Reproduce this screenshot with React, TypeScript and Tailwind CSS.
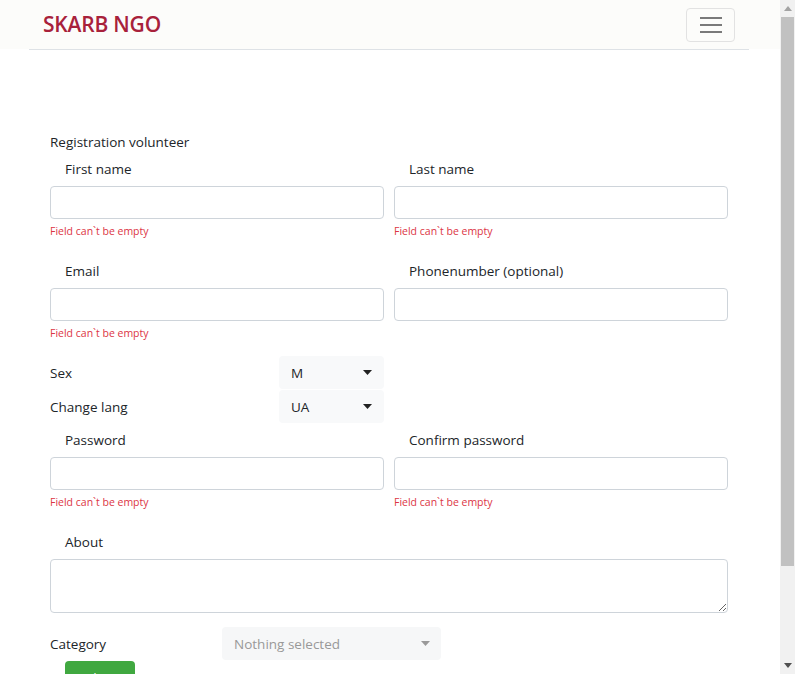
import React from "react";

const font = { fontFamily: '"Open Sans", "Noto Sans", Arial, sans-serif' };

function Caret({ gray }: { gray?: boolean }) {
  return (
    <svg width="9" height="5" viewBox="0 0 9 5" className="shrink-0">
      <path d="M0 0 L9 0 L4.5 5 Z" fill={gray ? "#9a9a9a" : "#222"} />
    </svg>
  );
}

function Field({ label, error }: { label: string; error?: boolean }) {
  return (
    <div className="flex flex-col w-[334px]">
      <div className="pl-[15px] h-[21px] leading-[23px] text-[13.5px] text-[#212529]">{label}</div>
      <div className="mt-[7px] h-[33px] rounded-[4px] border border-[#ced4da] bg-white" />
      {error ? (
        <div className="mt-[4px] h-[16px] leading-[16px] text-[10.5px] text-[#dc3545]">Field can`t be empty</div>
      ) : (
        <div className="mt-[4px] h-[16px]" />
      )}
    </div>
  );
}

function SelectRow({ label, value, top }: { label: string; value: string; top?: boolean }) {
  return (
    <div className={`flex items-center h-[33px] ${top ? "" : "mt-[1px]"}`}>
      <div className="w-[229px] pt-[2px] text-[13.5px] text-[#212529]">{label}</div>
      <div className="w-[105px] h-[33px] rounded-[4px] bg-[#f8f9fa] flex items-center justify-between pl-[12px] pr-[12px] text-[13.5px] text-[#212529]">
        <span className="pt-[2px]">{value}</span>
        <Caret />
      </div>
    </div>
  );
}

function Scrollbar() {
  return (
    <div className="w-[15px] h-[674px] bg-[#f1f1f1] flex flex-col items-center shrink-0">
      <div className="h-[17px] w-full flex items-center justify-center">
        <svg width="8" height="5" viewBox="0 0 8 5"><path d="M0 5 L8 5 L4 0 Z" fill="#a3a3a3" /></svg>
      </div>
      <div className="w-[13px] h-[549px] bg-[#c1c1c1]" />
      <div className="flex-1" />
      <div className="h-[17px] w-full flex items-center justify-center">
        <svg width="8" height="5" viewBox="0 0 8 5"><path d="M0 0 L8 0 L4 5 Z" fill="#505050" /></svg>
      </div>
    </div>
  );
}

export default function App() {
  return (
    <div className="flex h-[674px] overflow-hidden bg-white" style={font}>
      <div className="w-[780px] shrink-0 h-[674px] overflow-hidden">
        <div className="bg-[#fcfcfa] h-[49px]">
          <div className="ml-[29px] w-[720px] h-[49px] flex items-center justify-between pl-[14px] pr-[14px]">
            <div className="text-[21px] font-semibold text-[#a8213b] tracking-[-0.2px]">SKARB NGO</div>
            <div className="w-[49px] h-[34px] rounded-[4px] border border-[#e2e2e2] flex flex-col items-center justify-center gap-[5px]">
              <div className="w-[22px] h-[2px] bg-[#7a7a7a]" />
              <div className="w-[22px] h-[2px] bg-[#7a7a7a]" />
              <div className="w-[22px] h-[2px] bg-[#7a7a7a]" />
            </div>
          </div>
        </div>
        <div className="ml-[29px] w-[720px] border-t border-[#dee2e6]">
          <div className="ml-[21px] w-[678px] pt-[82px] flex flex-col">
            <div className="h-[21px] leading-[21px] text-[13.5px] text-[#212529]">Registration volunteer</div>
            <div className="mt-[5px] flex gap-[10px]">
              <Field label="First name" error />
              <Field label="Last name" error />
            </div>
            <div className="mt-[21px] flex gap-[10px]">
              <Field label="Email" error />
              <Field label="Phonenumber (optional)" />
            </div>
            <div className="mt-[15px] flex flex-col">
              <SelectRow label="Sex" value="M" top />
              <SelectRow label="Change lang" value="UA" />
            </div>
            <div className="mt-[6px] flex gap-[10px]">
              <Field label="Password" error />
              <Field label="Confirm password" error />
            </div>
            <div className="mt-[21px] flex flex-col">
              <div className="pl-[15px] h-[21px] leading-[23px] text-[13.5px] text-[#212529]">About</div>
              <textarea className="mt-[7px] h-[54px] w-[678px] rounded-[4px] border border-[#ced4da] bg-white" />
            </div>
            <div className="mt-[14px] flex items-center h-[33px]">
              <div className="w-[172px] pt-[2px] text-[13.5px] text-[#212529]">Category</div>
              <div className="w-[219px] h-[33px] rounded-[4px] bg-[#f6f7f8] flex items-center justify-between pl-[12px] pr-[11px] text-[13.5px] text-[#999]">
                <span className="pt-[2px]">Nothing selected</span>
                <Caret gray />
              </div>
            </div>
            <div className="ml-[15px] mt-[1px] w-[70px] h-[34px] rounded-[4px] bg-[#40a840] text-white text-[13.5px] flex items-center justify-center">
              Submit
            </div>
          </div>
        </div>
      </div>
      <Scrollbar />
    </div>
  );
}
